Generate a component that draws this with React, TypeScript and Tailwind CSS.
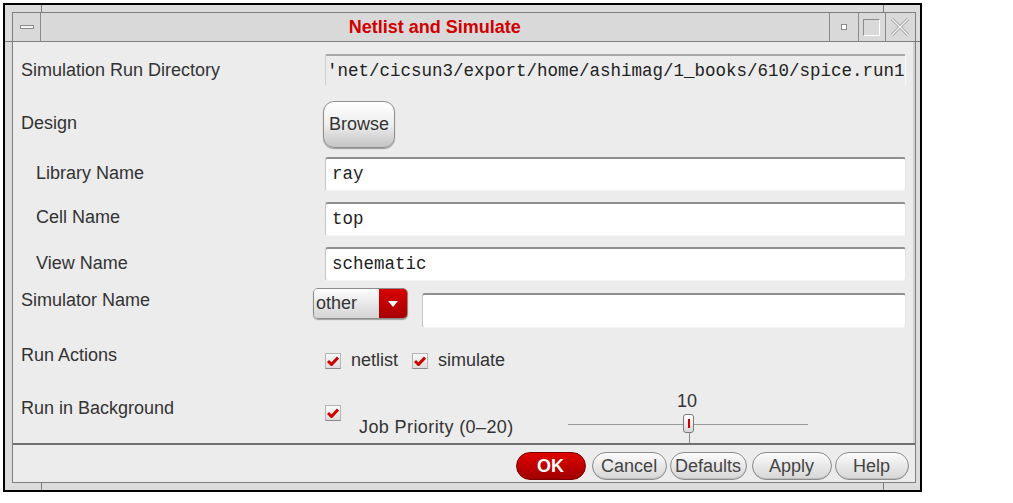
import React from "react";

const label = "text-[18px] leading-[20px] text-[#333]";
const mono = "font-['Liberation_Mono',monospace] text-[17.5px] text-[#222]";

function Check() {
  return (
    <span className="w-[16px] h-[16px] flex items-center justify-center bg-gradient-to-b from-[#fafafa] to-[#dcdcdc] border border-[#b4b4b4] border-b-[#8a8a8a] shrink-0">
      <svg width="12" height="10" viewBox="0 0 12 10">
        <path d="M1 5 L4.5 8.5 L11 1.5" stroke="#d00000" strokeWidth="3" fill="none" />
      </svg>
    </span>
  );
}

const Field = ({ value, className = "" }: { value: string; className?: string }) => (
  <div
    className={
      "flex items-center bg-white rounded-[3px] border-t-2 border-t-[#8f8f8f] border-l border-l-[#c4c4c4] border-b border-b-[#f4f4f4] border-r border-r-[#e4e4e4] pl-[6px] " +
      className
    }
  >
    <span className={mono}>{value}</span>
  </div>
);

const PillButton = ({ children, w }: { children: React.ReactNode; w: string }) => (
  <button
    className={
      "h-[28px] rounded-full border border-[#8c8c8c] bg-gradient-to-b from-[#fbfbfb] to-[#d6d6d6] text-[18px] text-[#444] flex items-center justify-center shadow-[inset_0_-1px_0_#bdbdbd] " +
      w
    }
  >
    {children}
  </button>
);

export default function App() {
  return (
    <div className="w-[1013px] h-[503px] bg-white pl-[3px] pt-[3px] font-['Liberation_Sans',Arial,sans-serif]">
      <div className="relative w-[919px] h-[489px] border-2 border-black bg-[#dcdcdc] p-[7px] flex">
        {/* frame resize marks */}
        <span className="absolute left-[36px] top-0 w-px h-[7px] bg-[#7a7a7a]" />
        <span className="absolute left-[878px] top-0 w-px h-[7px] bg-[#7a7a7a]" />
        <span className="absolute left-[36px] bottom-0 w-px h-[7px] bg-[#7a7a7a]" />
        <span className="absolute left-[878px] bottom-0 w-px h-[7px] bg-[#7a7a7a]" />
        <span className="absolute left-0 top-[36px] w-[7px] h-px bg-[#7a7a7a]" />
        <span className="absolute right-0 top-[36px] w-[7px] h-px bg-[#7a7a7a]" />

        <div className="flex-1 flex flex-col border border-[#7e7e7e] bg-[#ececec]">
          {/* title bar */}
          <div className="h-[29px] flex bg-[#d9d9d9] border-b border-[#7e7e7e]">
            <div className="w-[28px] border-r border-[#8a8a8a] flex items-center justify-center">
              <span className="w-[14px] h-[4px] border border-[#8c8c8c] bg-[#f4f4f4]" />
            </div>
            <div className="flex-1 flex items-center justify-center text-[18px] font-bold text-[#d00000]">
              Netlist and Simulate
            </div>
            <div className="w-[29px] border-l border-[#8a8a8a] flex items-center justify-center">
              <span className="w-[6px] h-[6px] border border-[#8c8c8c] bg-white" />
            </div>
            <div className="w-[27px] border-l border-[#8a8a8a] flex items-center justify-center">
              <span className="w-[17px] h-[17px] border border-[#8c8c8c] border-r-white border-b-white" />
            </div>
            <div className="w-[30px] border-l border-[#8a8a8a] flex items-center justify-center">
              <svg width="20" height="20" viewBox="0 0 20 20">
                <path d="M2 2 L18 18 M18 2 L2 18" stroke="#9a9a9a" strokeWidth="3" />
                <path d="M2 2 L18 18 M18 2 L2 18" stroke="#f4f4f4" strokeWidth="1.4" />
              </svg>
            </div>
          </div>

          {/* content */}
          <div className="flex-1 flex flex-col pl-[8px] pr-[7px] border-r-2 border-r-[#d0d0d0]">
            <div className="mt-[12px] h-[32px] flex items-center">
              <div className={label + " w-[304px]"}>Simulation Run Directory</div>
              <div className="flex-1 h-full flex items-center overflow-hidden border-t-2 border-t-[#a8a8a8] border-l border-l-[#cfcfcf] border-r border-r-[#f8f8f8] rounded-[2px] pl-[1px]">
                <span className={mono + " whitespace-nowrap"}>'net/cicsun3/export/home/ashimag/1_books/610/spice.run1</span>
              </div>
            </div>

            <div className="mt-[15px] h-[47px] flex items-center">
              <div className={label + " w-[302px] -mt-[4px]"}>Design</div>
              <button className="w-[72px] h-[47px] rounded-[11px] border border-[#8f8f8f] bg-gradient-to-b from-[#ffffff] via-[#eeeeee] to-[#c4c4c4] text-[18px] text-[#333] shadow-[0_1px_1px_#9a9a9a]">
                Browse
              </button>
            </div>

            <div className="mt-[9px] h-[34px] flex items-center">
              <div className={label + " w-[304px] pl-[15px] -mt-[2px]"}>Library Name</div>
              <Field value="ray" className="flex-1 h-full" />
            </div>
            <div className="mt-[11px] h-[34px] flex items-center">
              <div className={label + " w-[304px] pl-[15px] -mt-[4px]"}>Cell Name</div>
              <Field value="top" className="flex-1 h-full" />
            </div>
            <div className="mt-[11px] h-[34px] flex items-center">
              <div className={label + " w-[304px] pl-[15px] -mt-[2px]"}>View Name</div>
              <Field value="schematic" className="flex-1 h-full" />
            </div>

            <div className="mt-[7px] h-[40px] flex items-start">
              <div className={label + " w-[292px] mt-[2px]"}>Simulator Name</div>
              <div className="w-[95px] h-[31px] flex rounded-[5px] border border-[#8c8c8c] overflow-hidden shadow-[0_1px_1px_#a0a0a0]">
                <div className="flex-1 flex items-center pl-[2px] bg-gradient-to-b from-[#fdfdfd] to-[#d4d4d4] text-[18px] text-[#333]">
                  other
                </div>
                <div className="w-[28px] flex items-center justify-center bg-gradient-to-b from-[#d80000] to-[#a80000]">
                  <svg width="10" height="6" viewBox="0 0 10 6">
                    <path d="M0 0 H10 L5 6 Z" fill="white" />
                  </svg>
                </div>
              </div>
              <Field value="" className="ml-[14px] mt-[5px] flex-1 h-[35px]" />
            </div>

            <div className="mt-[17px] h-[22px] flex items-start">
              <div className={label + " w-[304px]"}>Run Actions</div>
              <div className="mt-[8px] flex items-center text-[18px] text-[#333]">
                <Check />
                <span className="leading-[16px] -mt-[2px] ml-[10px]">netlist</span>
                <span className="ml-[14px]">
                  <Check />
                </span>
                <span className="leading-[16px] -mt-[2px] ml-[10px]">simulate</span>
              </div>
            </div>

            <div className="mt-[31px] flex items-start">
              <div className={label + " w-[304px]"}>Run in Background</div>
              <div className="mt-[7px]">
                <Check />
              </div>
              <div className={label + " ml-[18px] mt-[19px] w-[209px] whitespace-nowrap tracking-[0.4px]"}>Job Priority (0–20)</div>
              <div className="-mt-[7px] w-[240px] flex flex-col items-center">
                <div className="text-[18px] leading-[20px] text-[#333] ml-[-2px]">10</div>
                <div className="relative w-full h-[32px]">
                  <span className="absolute left-0 right-0 top-[13px] h-px bg-[#9a9a9a]" />
                  <span className="absolute left-[115px] top-[3px] w-[11px] h-[19px] rounded-[3px] border border-[#7a7a7a] bg-gradient-to-b from-white to-[#d8d8d8] flex items-center justify-center">
                    <span className="w-[2px] h-[9px] bg-[#d00000]" />
                  </span>
                  <span className="absolute left-[121px] top-[22px] w-px h-[10px] bg-[#888]" />
                </div>
              </div>
            </div>
          </div>

          {/* separator + buttons */}
          <div className="h-[39px] border-t-2 border-t-[#6f6f6f] flex items-start justify-end pr-[6px] pt-[7px] gap-[3px]">
            <button className="w-[70px] h-[28px] mr-[3px] rounded-full border border-[#7a0000] bg-gradient-to-b from-[#e00000] to-[#a00000] text-white font-bold text-[18px] flex items-center justify-center">
              OK
            </button>
            <PillButton w="w-[75px]">Cancel</PillButton>
            <PillButton w="w-[77px]">Defaults</PillButton>
            <PillButton w="w-[80px] ml-[2px]">Apply</PillButton>
            <PillButton w="w-[74px]">Help</PillButton>
          </div>
        </div>
      </div>
    </div>
  );
}
